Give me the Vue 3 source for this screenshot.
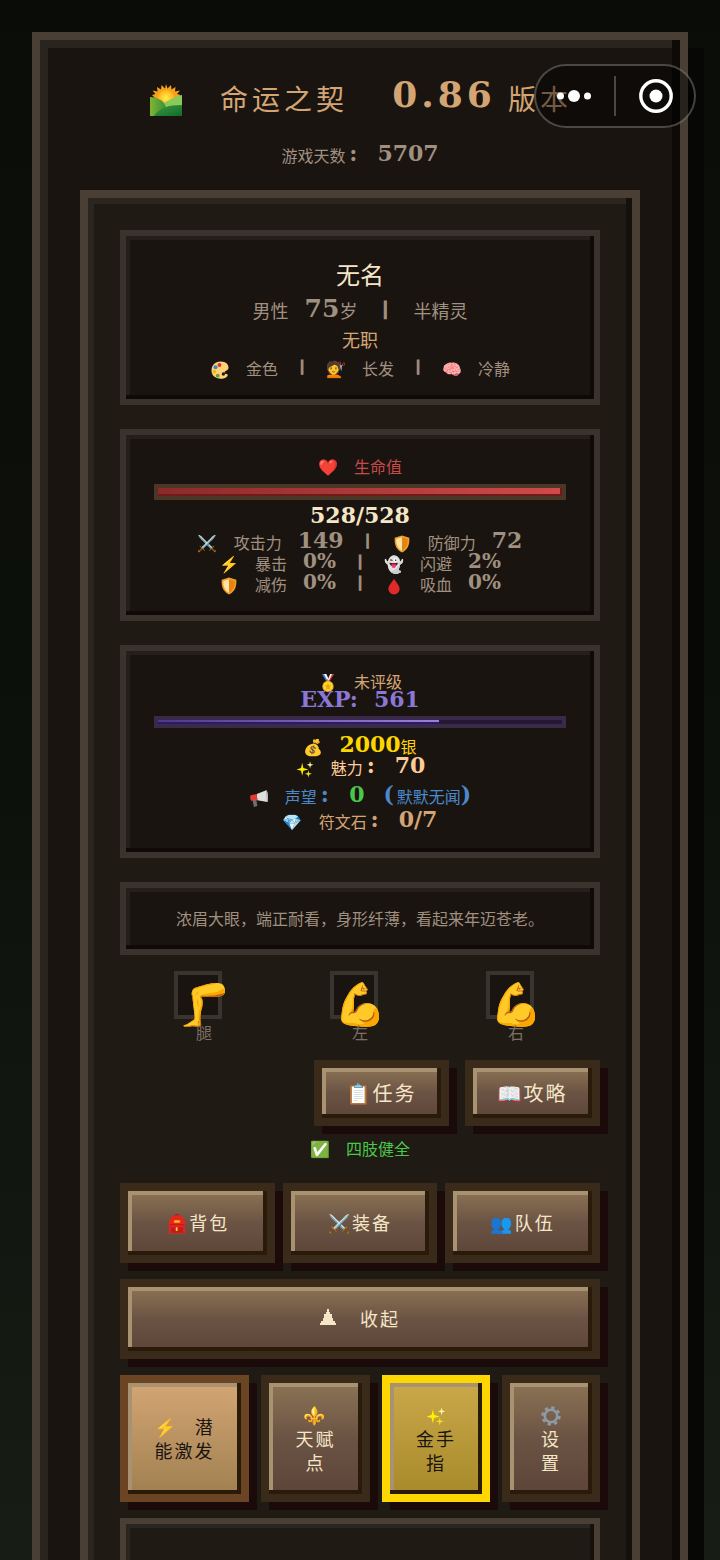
<!-- Pantalla principal del personaje -->
<script setup>
import { h } from 'vue'

const profile = [
  { icon: 'palette', text: '金色' },
  { icon: '💇', text: '长发' },
  { icon: '🧠', text: '冷静' },
]

const stats = [
  [{ icon: '⚔️', label: '攻击力', value: '149' }, { icon: 'shield', label: '防御力', value: '72' }],
  [{ icon: '⚡', label: '暴击', value: '0%' }, { icon: '👻', label: '闪避', value: '2%' }],
  [{ icon: 'shield', label: '减伤', value: '0%' }, { icon: 'drop', label: '吸血', value: '0%' }],
]

const limbs = [
  { icon: '🦵', name: '腿' },
  { icon: '💪', name: '左' },
  { icon: '💪', name: '右' },
]

const mainActions = [
  { icon: 'pack', text: '背包' },
  { icon: '⚔️', text: '装备' },
  { icon: '👥', text: '队伍' },
]

const hp = { now: 528, max: 528 }
const exp = { now: 561, next: 806 }

// nombre ascii = dibujo del sprite; cualquier otra cosa = emoji
const Ico = ({ name }) =>
  /^[a-z]+$/.test(name)
    ? h('svg', { class: 'ico', viewBox: '0 0 32 32', 'aria-hidden': 'true' }, [h('use', { href: '#' + name })])
    : h('span', { class: 'emoji' }, name)
Ico.props = ['name']
</script>

<template>
  <svg class="sprite" aria-hidden="true">
    <defs>
      <linearGradient id="hill" x2="1"><stop stop-color="#7fb52f" /><stop offset="1" stop-color="#3c8f3c" /></linearGradient>
      <linearGradient id="hill2" x2="1" y2="1"><stop stop-color="#3c9a3f" /><stop offset="1" stop-color="#0f6b2c" /></linearGradient>
      <radialGradient id="glow"><stop stop-color="#fff04a" /><stop offset="1" stop-color="#ffb21e" /></radialGradient>
      <symbol id="sunrise" viewBox="0 0 32 32">
        <path d="M16 0l1.500 4.500L21 1l.5 4.500L25.500 3l-.5 4.500 5-1-3 3.500 3.500 1L26 15H6l-4-4 3.500-1-3-3.500 5 1L7 3l4 2.500L11.500 1 15 4.500z" fill="#f6a21c" />
        <circle cx="16" cy="14" r="8" fill="url(#glow)" />
        <path d="M0 13c7 0 12 3 16 8v11H0z" fill="url(#hill)" />
        <path d="M32 11c-7 1-12 5-18 8l4 8 14-3z" fill="#8cc85a" />
        <path d="M4 32c5-8 14-11 28-11v11z" fill="url(#hill2)" />
      </symbol>
      <symbol id="shield" viewBox="0 0 32 32">
        <path d="M16 1l13 4c1 14-4 22-13 26C7 27 2 19 3 5z" fill="#f2a02c" />
        <path d="M16 4v24C9 24 5 17 6 7z" fill="#ffe3a3" />
        <path d="M16 4v24c7-4 11-11 10-21z" fill="#e78411" />
      </symbol>
      <symbol id="drop" viewBox="0 0 32 32">
        <path d="M16 3c4 7 10 12 10 18a10 10 0 0 1-20 0C6 15 12 10 16 3z" fill="#e02a2a" />
      </symbol>
      <symbol id="medal" viewBox="0 0 32 32">
        <path d="M5 0h6l8 13h-6z" fill="#3f7fd0" /><path d="M9 0h4l5 11-3 1z" fill="#fff" />
        <path d="M21 0h6l-8 13h-6z" fill="#d33a3a" /><path d="M20 0h3l-5 11-3 1z" fill="#fff" />
        <circle cx="16" cy="22" r="10" fill="#f0b415" />
        <circle cx="16" cy="22" r="8" fill="#ffd62c" />
        <path d="M16 16l2 4 4 .5-3 3 1 4.500-4-2-4 2 1-4.500-3-3 4-.5z" fill="#e8a80e" />
      </symbol>
      <symbol id="spark" viewBox="0 0 32 32">
        <path d="M11 5l2 9 9 3-9 2-2 9-2-9-8-2 8-3z" fill="#fff000" />
        <path d="M25 2l1.200 5L31 8.500 26.200 10 25 15l-1.200-5L19 8.500 23.800 7z" fill="#fff6a0" />
        <path d="M22 18l1.300 5 5 1.500-5 1.500L22 31l-1.300-5-5-1.500 5-1.500z" fill="#f5df2a" />
      </symbol>
      <symbol id="horn" viewBox="0 0 32 32">
        <path d="M4 18l7-1 2 13-6 2z" fill="#6e6e6e" />
        <path d="M12 9L29 2c3 6 3 16 2 21l-18-3z" fill="#dedede" />
        <path d="M28 2c3 0 4 6 4 11s-1 10-2 10z" fill="#b5b5b5" />
        <path d="M1 11l11-2 1 11-11 1c-2-3-2-7-1-10z" fill="#e23b33" />
      </symbol>
      <symbol id="palette" viewBox="0 0 32 32">
        <path d="M17 1c10 0 15 6 14 12-1 5-7 4-7 8 0 3 5 1 6 4-2 6-9 7-15 6C6 30 0 24 1 15 2 6 9 1 17 1z" fill="#ffd27a" />
        <circle cx="15" cy="7" r="3.500" fill="#d9352b" /><circle cx="8" cy="11" r="3.500" fill="#3a86cc" />
        <circle cx="6" cy="19" r="3" fill="#f3b500" /><circle cx="12" cy="26" r="3.500" fill="#5da532" />
        <circle cx="22" cy="23" r="3" fill="#2a1a14" />
      </symbol>
      <symbol id="pack" viewBox="0 0 32 32">
        <path d="M12 3c0-4 8-4 8 0z" fill="#a81b1b" />
        <path d="M3 31V15C3 6 9 2 16 2s13 4 13 13v16z" fill="#e3271f" />
        <path d="M4 16h24v2H4zM6 21h20v9H6z" fill="#c21d1a" />
        <rect x="11" y="10" width="10" height="4" rx="2" fill="#ffb41e" />
        <rect x="14" y="21" width="3" height="6" rx="1" fill="#ffcf2e" />
      </symbol>
      <symbol id="gear" viewBox="0 0 32 32">
        <circle cx="16" cy="16" r="13.500" fill="none" stroke="#8f9ca5" stroke-width="4" stroke-dasharray="5.300 5.300" />
        <circle cx="16" cy="16" r="10" fill="none" stroke="#8f9ca5" stroke-width="4" />
      </symbol>
    </defs>
  </svg>

  <div class="screen">
    <main class="frame">
      <header class="head">
        <h1 class="title">
          <Ico name="sunrise" />
          <span class="name">命运之契</span>
          <span class="version"><b class="num">0.86</b>版本</span>
        </h1>
        <p class="row days">游戏天数<b class="num cell">:</b><b class="num after">5707</b></p>
      </header>

      <section class="board">
        <section class="card who">
          <h2>无名</h2>
          <p class="row race">
            男性<b class="num after">75</b>岁<b class="bar">|</b>半精灵
          </p>
          <p class="row job">无职</p>
          <p class="row look">
            <template v-for="(p, i) in profile" :key="p.text">
              <b v-if="i" class="bar">|</b>
              <Ico :name="p.icon" /><span class="after">{{ p.text }}</span>
            </template>
          </p>
        </section>

        <section class="card">
          <p class="row life"><Ico name="❤️" /><span class="after">生命值</span></p>
          <div class="meter hp">
            <div class="fill" :style="{ width: (hp.now / hp.max) * 100 + '%' }"></div>
          </div>
          <p class="row hp-text"><b class="num">{{ hp.now }}/{{ hp.max }}</b></p>
          <p v-for="(pair, r) in stats" :key="r" class="row">
            <template v-for="(s, i) in pair" :key="s.label">
              <b v-if="i" class="bar">|</b>
              <Ico :name="s.icon" />
              <span class="after">{{ s.label }}</span>
              <b class="num after" :class="{ pct: s.value.endsWith('%') }">{{ s.value }}</b>
            </template>
          </p>
        </section>

        <section class="card">
          <p class="row gold"><Ico name="medal" /><span class="after">未评级</span></p>
          <p class="row exp-text"><b class="num">EXP:</b><b class="num after">{{ exp.now }}</b></p>
          <div class="meter exp">
            <div class="fill" :style="{ width: (exp.now / exp.next) * 100 + '%' }"></div>
          </div>
          <p class="row silver"><Ico name="💰" /><b class="num after">2000</b>银</p>
          <p class="row charm">
            <Ico name="spark" /><span class="after">魅力</span><b class="num cell">:</b><b class="num after">70</b>
          </p>
          <p class="row fame">
            <Ico name="horn" /><span class="after">声望</span><b class="num cell">:</b>
            <b class="num after cell good">0</b><b class="num after cell">(</b>默默无闻<b class="num">)</b>
          </p>
          <p class="row rune">
            <Ico name="💎" /><span class="after">符文石</span><b class="num cell">:</b><b class="num after">0/7</b>
          </p>
        </section>

        <section class="card">
          <p class="row">浓眉大眼，端正耐看，身形纤薄，看起来年迈苍老。</p>
        </section>

        <ul class="limbs">
          <li v-for="l in limbs" :key="l.name">
            <div class="slot"><Ico :name="l.icon" /></div>
            <span class="limb-name">{{ l.name }}</span>
          </li>
        </ul>

        <nav class="quick">
          <button type="button" class="btn"><Ico name="📋" />任务</button>
          <button type="button" class="btn"><Ico name="📖" />攻略</button>
        </nav>
        <p class="row healthy"><Ico name="✅" /><span class="after">四肢健全</span></p>

        <nav class="actions">
          <button v-for="a in mainActions" :key="a.text" type="button" class="btn">
            <Ico :name="a.icon" />{{ a.text }}
          </button>
        </nav>

        <button type="button" class="btn fold">
          <svg width="16" height="16" viewBox="0 0 16 16" shape-rendering="crispEdges" aria-hidden="true">
            <path d="M7 0h2v3h1v2h2v4h1v3h2v2h1v2H0v-2h1v-2h2V9h1V5h2V3h1z" fill="currentColor" />
          </svg>
          收起
        </button>

        <nav class="extras">
          <button type="button" class="btn copper"><span><Ico name="⚡" /><span class="after">潜</span><br>能激发</span></button>
          <button type="button" class="btn stack"><Ico name="⚜️" />天赋<br>点</button>
          <button type="button" class="btn stack golden"><Ico name="spark" />金手<br>指</button>
          <button type="button" class="btn stack"><Ico name="gear" />设<br>置</button>
        </nav>

        <section class="log"></section>
      </section>
    </main>

    <div class="capsule">
      <button type="button" aria-label="更多">
        <svg width="34" height="12" viewBox="0 0 34 12" fill="#fff">
          <circle cx="3.500" cy="6" r="3.500" /><circle cx="17" cy="6" r="6" /><circle cx="30.500" cy="6" r="3.500" />
        </svg>
      </button>
      <i></i>
      <button type="button" aria-label="关闭">
        <svg width="34" height="34" viewBox="0 0 34 34">
          <circle cx="17" cy="17" r="15.200" fill="none" stroke="#fff" stroke-width="3.400" />
          <circle cx="17" cy="17" r="6.500" fill="#fff" />
        </svg>
      </button>
    </div>
  </div>
</template>

<style>
body { background: #0a0c07; }
</style>

<style scoped>
.sprite { position: absolute; width: 0; height: 0; }
.screen {
  position: relative; box-sizing: border-box;
  height: 100vh; overflow-y: auto; scrollbar-width: none;
  padding: 32px;
  background: linear-gradient(#0a0c07, #0d110c 50%, #171c15);
  font: 16px/21px "Liberation Sans", "Noto Sans CJK SC", sans-serif;
  color: #a09080;
}
h1, h2, p, ul { margin: 0; padding: 0; font-weight: 400; list-style: none; }

.frame {
  border: 8px solid #4a3f35;
  padding: 32px 40px;
  background: #1a1410;
  box-shadow: inset -8px -8px #0d0a08, inset 8px 8px #2a241e, 16px 16px #070705;
}

/* cabecera */
.title {
  display: flex; justify-content: center; align-items: center;
  height: 56px;
  font-size: 28px; letter-spacing: 4px; white-space: nowrap;
  color: #d4a574;
}
.title .name { margin: 0 32px; }
.title .num { min-width: 128px; font-size: 36px; margin-bottom: 12px; text-align: center; }
.title .ico { width: 32px; height: 32px; margin: 0 6px 0 2px; }
.version { display: flex; align-items: center; }
.days { margin: 17px 0 24px; }

.board {
  border: 8px solid #4a3f35;
  padding: 32px;
  background: #1f1a14;
  box-shadow: inset -6px -6px #14100b, inset 6px 6px #2a251f;
}

/* textos */
.row {
  display: flex; justify-content: center; align-items: center;
  box-sizing: border-box; height: 21px; padding-top: 2px; white-space: nowrap;
}
.num {
  font: bold 22px/16px "DejaVu Serif", serif;
  margin-bottom: 8px;
}
.num.pct { font-size: 20px; }
.cell { width: 16px; text-align: center; }
.after { margin-left: 16px; }
.bar {
  font: bold 14px/14px "DejaVu Sans", sans-serif;
  -webkit-text-stroke: 1px currentColor;
  margin: 0 16px 8px; width: 16px; text-align: center;
}
.emoji { width: 20px; text-align: center; font-family: "Noto Color Emoji", sans-serif; }
.ico { width: 18px; height: 18px; margin: 0 1px; }

.card {
  border: 6px solid #3a332d;
  padding: 20px 28px;
  margin-bottom: 24px;
  background: #1a1410;
  box-shadow: inset -4px -4px #0d0a08, inset 4px 4px #241f1a;
}
.who { padding-bottom: 15px; }
.who h2 { font-size: 24px; line-height: 40px; text-align: center; color: #f5e6c8; }
.race { height: 31px; font-size: 18px; }
.race .num { font-size: 25px; }
.race .bar { font-size: 18px; margin: 0 20px 8px; }
.job { height: 26px; font-size: 18px; color: #d4a574; }
.look { height: 31px; }

.life { height: 22px; margin-bottom: 7px; color: #c94a4a; }
.hp-text { height: 32px; color: #f5e6c8; }
.hp-text .num { margin-bottom: 4px; }

.meter { box-sizing: border-box; border: 4px solid; }
.meter .fill { height: 100%; }
.hp { height: 16px; border-color: #4a3728; background: #2a1a1a; }
.hp .fill { background: linear-gradient(90deg, #8b2a2a, #d04a4a); box-shadow: inset -2px -2px #701a1a; }
.exp { height: 12px; border-color: #3a2a4a; background: #241832; }
.exp .fill { background: linear-gradient(90deg, #4a3a8a, #9a80e0); box-shadow: inset 0 -2px #2e1a5e; }

.gold, .rune { color: #d4a574; }
.exp-text { height: 16px; margin-bottom: 8px; color: #8a78d8; }
.exp-text .num { margin-bottom: 4px; }
.silver { margin-top: 8px; color: #ffd700; }
.charm { color: #ffcc99; }
.fame { margin-top: 8px; color: #4a8acc; }
.rune { margin-top: 4px; }
.good { color: #4ac84a; }

/* extremidades */
.limbs { display: grid; grid-template-columns: repeat(3, 1fr); margin: -8px 6px 0; }
.limbs li { width: 60px; margin: 0 auto; }
.slot {
  box-sizing: border-box; width: 48px; height: 48px;
  border: 4px solid #3a342f; background: #1a1410;
}
.slot .emoji { display: block; width: 52px; font-size: 42px; line-height: 60px; }
.limb-name { display: block; margin-top: 5px; line-height: 20px; text-align: center; color: #7c7064; }

/* botones */
.btn {
  display: flex; justify-content: center; align-items: center;
  box-sizing: border-box; height: 80px; padding: 2px 24px 0;
  border: 8px solid #3a2a1a;
  background: linear-gradient(#8b7355, #6b5344 50%, #5c4438);
  box-shadow: inset -4px -4px #2a1a0a, inset 4px 4px #a89272, 8px 8px #1a0a0a;
  font: 18px/24px "Liberation Sans", "Noto Sans CJK SC", sans-serif;
  letter-spacing: 2px; white-space: nowrap;
  color: #f5e6c8;
}
.btn .emoji { width: 24px; }
.btn .ico { width: 20px; height: 20px; margin: 2px; }
.quick { display: flex; justify-content: flex-end; gap: 16px; margin-top: 16px; }
.quick .btn { width: 135px; height: 66px; font-size: 20px; }
.quick .emoji { width: 26px; }
.healthy { margin: 12px 0 24px; color: #4ac84a; }
.actions { display: grid; grid-template-columns: repeat(3, 1fr); gap: 8px; }
.fold { width: 100%; margin: 16px 0; gap: 24px; }
.fold svg { margin-bottom: 6px; }

.extras { display: grid; grid-template-columns: 129fr 109fr 108fr 98fr; gap: 12px; }
.extras .btn { height: 127px; padding: 2px 0 0; }
.extras .stack { flex-direction: column; }
.extras .copper { border-color: #6b4423; background: linear-gradient(#d4a574, #a08050); color: #1a1410; }
.extras .golden { border-color: #ffd700; background: linear-gradient(#c9a84a, #a88a2a); color: #1a1410; }

.log {
  min-height: 200px; margin-top: 16px;
  border: 6px solid #4a3f35;
  background: #1f1a14;
  box-shadow: inset -4px -4px #14100b, inset 4px 4px #2a251f;
}

/* menú flotante */
.capsule {
  position: absolute; top: 64px; right: 24px;
  display: flex; align-items: center;
  box-sizing: border-box; width: 162px; height: 64px;
  border: 2px solid rgba(255, 255, 255, .25); border-radius: 32px;
  background: rgba(0, 0, 0, .45);
}
.capsule i { width: 2px; height: 40px; margin: 0 2px; background: rgba(255, 255, 255, .25); }
.capsule button {
  flex: 1; display: flex; justify-content: center;
  padding: 0; border: 0; background: none;
}
</style>
